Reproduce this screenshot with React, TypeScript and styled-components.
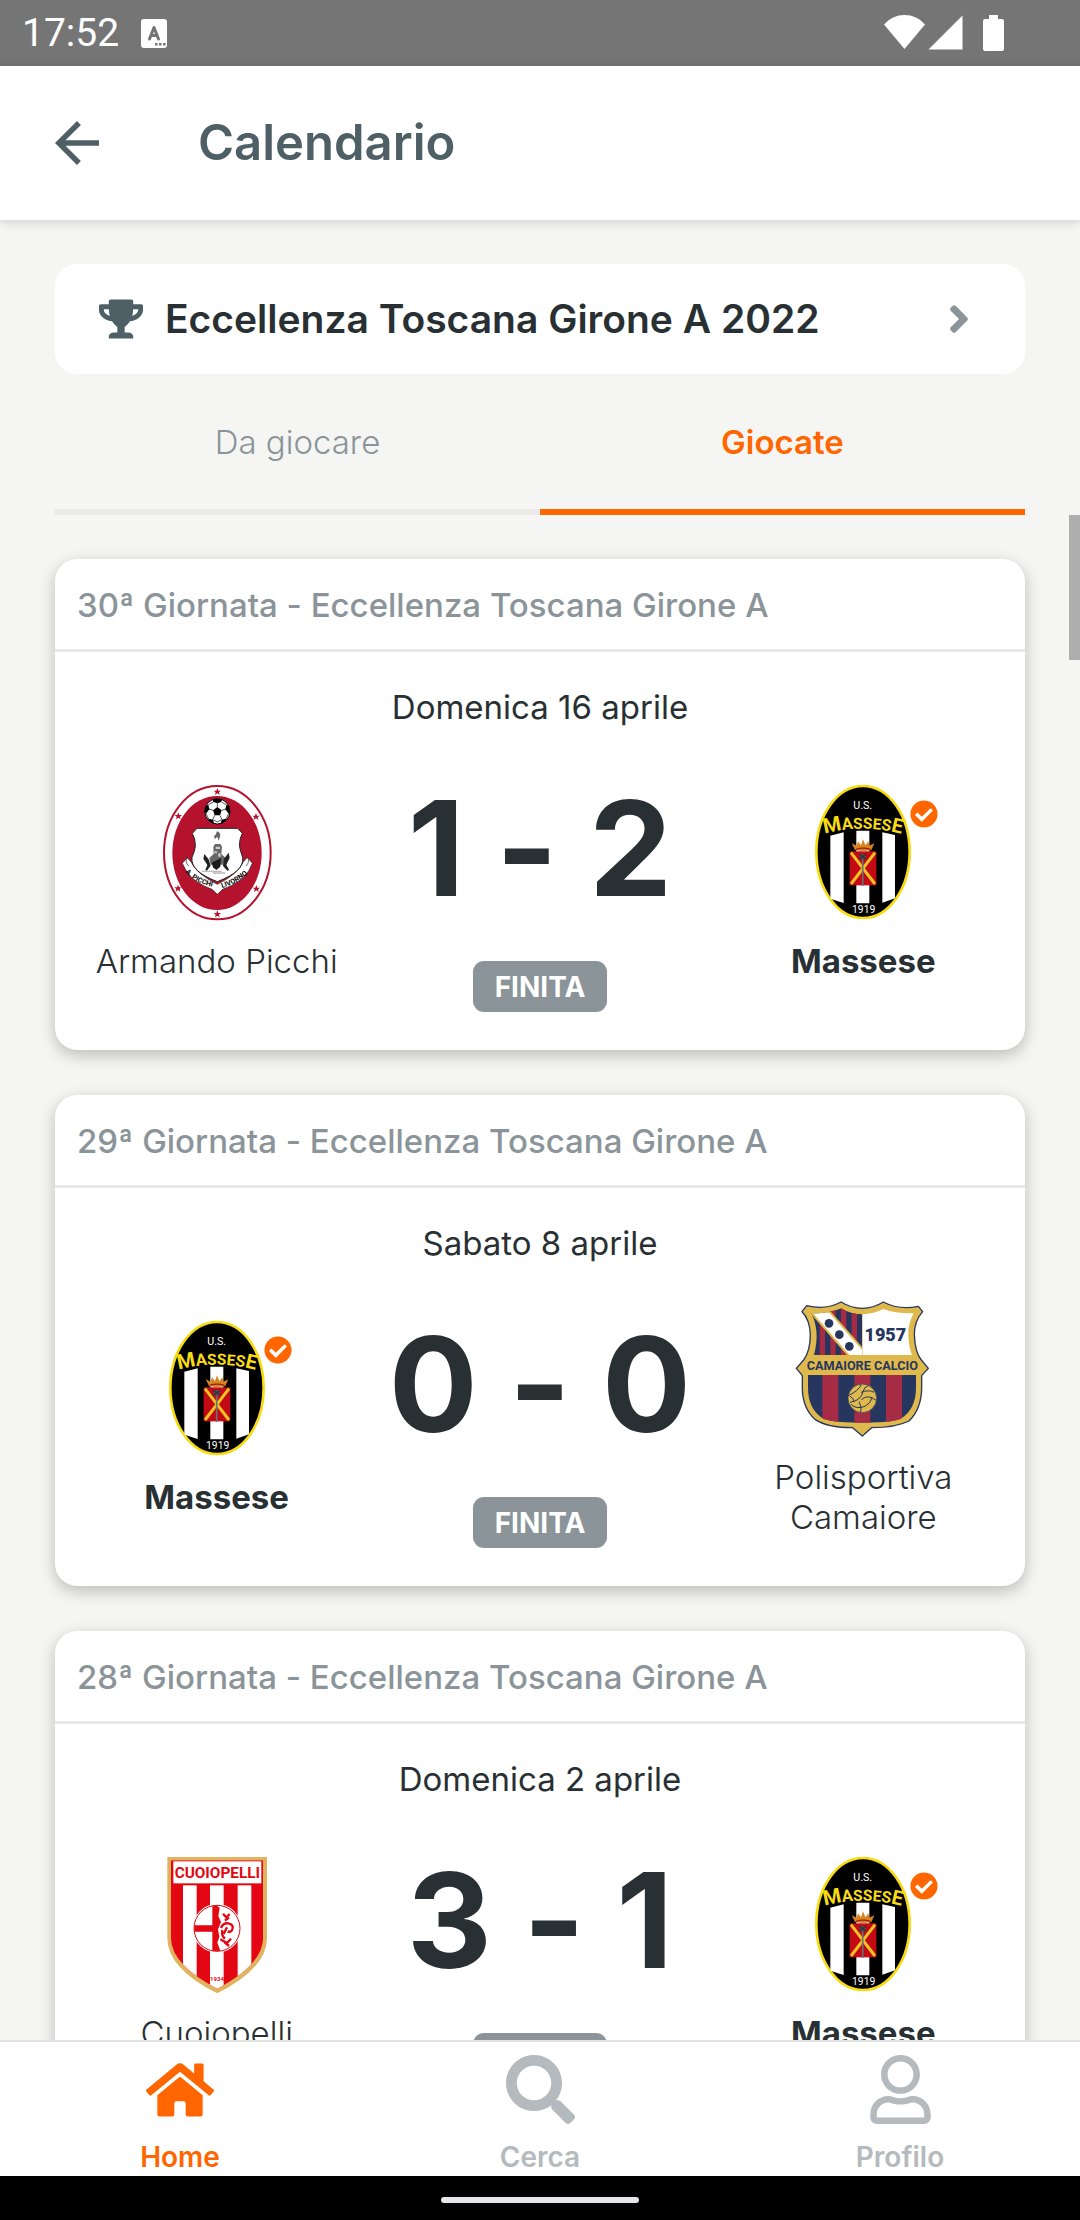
import React from "react";
import styled, { createGlobalStyle } from "styled-components";
import {
  FaAngleRight,
  FaCheckCircle,
  FaHome,
  FaRegUser,
  FaSearch,
  FaTrophy,
} from "react-icons/fa";
import { MdArrowBack } from "react-icons/md";

const color = {
  ink: "#283033",
  slate: "#4f5f66",
  muted: "#8a9499",
  faint: "#b4babd",
  accent: "#ff6600",
  page: "#f5f5f3",
  line: "#ebeae8",
};

const GlobalStyle = createGlobalStyle`
  *, *::before, *::after { box-sizing: border-box; }
  body { margin: 0; background: ${color.page}; }
  button { border: 0; padding: 0; background: none; font: inherit; color: inherit; cursor: pointer; }
  h1, h2, p { margin: 0; }
  svg { display: block; flex: none; }
`;

const Screen = styled.div`
  display: flex;
  flex-direction: column;
  height: 100vh;
  overflow: hidden;
  background: ${color.page};
  color: ${color.ink};
  font-family: Inter, "Open Sans", sans-serif;
  font-size: 33px;
  line-height: 40px;
  font-variant-ligatures: no-contextual;
`;

const StatusBar = styled.div`
  display: flex;
  align-items: center;
  justify-content: space-between;
  flex: none;
  height: 66px;
  padding: 0 76px 0 22px;
  background: #757575;
  color: #fff;
`;

const StatusGroup = styled.div<{ $gap: number }>`
  display: flex;
  align-items: center;
  gap: ${(p) => p.$gap}px;
`;

const Clock = styled.time`
  font-family: Roboto, sans-serif;
  font-size: 39px;
  line-height: 66px;
`;

const Header = styled.header`
  position: relative;
  z-index: 1;
  display: flex;
  align-items: center;
  gap: 88px;
  flex: none;
  height: 154px;
  padding: 0 44px;
  background: #fff;
  color: ${color.slate};
  box-shadow: 0 2px 10px rgba(0, 0, 0, 0.16);
`;

const Title = styled.h1`
  font-size: 49px;
  line-height: 60px;
  font-weight: 600;
`;

const Filters = styled.div`
  flex: none;
  padding: 44px 55px 0;
`;

const Competition = styled.button`
  display: flex;
  align-items: center;
  gap: 22px;
  width: 100%;
  height: 110px;
  padding: 0 55px 0 44px;
  border-radius: 22px;
  background: #fff;
  text-align: left;
`;

const CompetitionName = styled.span`
  flex: 1;
  font-size: 39px;
  line-height: 48px;
  font-weight: 600;
`;

const Tabs = styled.div`
  display: grid;
  grid-template-columns: 1fr 1fr;
`;

const Tab = styled.button<{ $active: boolean }>`
  height: 141px;
  border-bottom: 6px solid ${(p) => (p.$active ? color.accent : color.line)};
  color: ${(p) => (p.$active ? color.accent : color.muted)};
  font-weight: ${(p) => (p.$active ? 600 : 350)};
`;

const ListArea = styled.main`
  position: relative;
  flex: 1;
  min-height: 0;
`;

const List = styled.div`
  display: flex;
  flex-direction: column;
  gap: 45px;
  height: 100%;
  padding: 44px 55px;
  overflow-y: auto;
  scrollbar-width: none;
`;

const ScrollThumb = styled.div`
  position: absolute;
  top: 0;
  right: 0;
  width: 11px;
  height: 145px;
  background: #aeaeae;
`;

const Card = styled.article`
  flex: none;
  border-radius: 22px;
  background: #fff;
  box-shadow: 0 5px 16px rgba(0, 0, 0, 0.24);
`;

const CardHeader = styled.h2`
  padding: 26px 22px 24px;
  border-bottom: 3px solid ${color.line};
  color: ${color.muted};
  font-size: 33px;
  line-height: 40px;
  font-weight: 500;
`;

const CardBody = styled.div`
  display: flex;
  flex-direction: column;
  gap: 26px;
  padding: 35px 0 38px;
  text-align: center;
`;

const MatchRow = styled.div`
  display: grid;
  grid-template-columns: repeat(3, 1fr);
  align-items: center;
`;

const TeamColumn = styled.div`
  display: flex;
  flex-direction: column;
  align-items: center;
  gap: 19px;
  padding: 0 22px;
`;

const CrestFrame = styled.div`
  position: relative;
  width: 138px;
  height: 138px;
`;

const Verified = styled(FaCheckCircle)`
  position: absolute;
  top: 16px;
  left: 116px;
  color: ${color.accent};
`;

const TeamName = styled.p<{ $bold?: boolean }>`
  font-weight: ${(p) => (p.$bold ? 700 : 350)};
`;

const ResultColumn = styled.div`
  display: flex;
  flex-direction: column;
  align-items: center;
  gap: 18px;
`;

const Score = styled.p`
  font-size: 132px;
  line-height: 190px;
  font-weight: 700;
  white-space: nowrap;
`;

const Status = styled.span`
  padding: 6px 22px 5px;
  border-radius: 11px;
  background: ${color.muted};
  color: #fff;
  font-size: 28px;
  font-weight: 700;
`;

const BottomNav = styled.nav`
  display: grid;
  grid-template-columns: repeat(3, 1fr);
  flex: none;
  height: 136px;
  border-top: 2px solid #e2e2e2;
  background: #fff;
`;

const NavLink = styled.a<{ $active?: boolean }>`
  display: flex;
  flex-direction: column;
  align-items: center;
  gap: 13px;
  padding-top: 13px;
  color: ${(p) => (p.$active ? color.accent : color.faint)};
  font-size: 28px;
  font-weight: 600;
  text-decoration: none;
`;

const NavIcon = styled.span`
  display: flex;
  align-items: center;
  height: 69px;
`;

const GestureBar = styled.div`
  display: flex;
  align-items: center;
  justify-content: center;
  flex: none;
  height: 44px;
  background: #000;
`;

const GestureHandle = styled.div`
  width: 198px;
  height: 6px;
  border-radius: 3px;
  margin-top: 4px;
  background: #e8e6e8;
`;

const badgeFont = "Roboto, sans-serif";

function MasseseCrest() {
  return (
    <svg width="138" height="138" viewBox="15 42 414 414" role="img" aria-label="Massese">
      <defs>
        <clipPath id="massese-oval">
          <ellipse cx="222" cy="246" rx="138" ry="195" />
        </clipPath>
        <path id="massese-arc" d="M98 194 Q222 158 346 194" />
      </defs>
      <ellipse cx="222" cy="246" rx="140" ry="198" fill="#000" stroke="#f7dc14" strokeWidth="8" />
      <g clipPath="url(#massese-oval)" fill="#fff">
        <path d="M124 197 L164 187 V399 L124 386Z" />
        <path d="M202 182 H241 V400 H202Z" />
        <path d="M280 187 L318 195 V385 L280 398Z" />
      </g>
      <text x="221" y="117" fill="#fff" fontFamily={badgeFont} fontSize="32" textAnchor="middle">U.S.</text>
      <text fill="#f7dc14" fontFamily={badgeFont} fontWeight="700">
        <textPath href="#massese-arc" startOffset="50%" textAnchor="middle">
          <tspan fontSize="62">M</tspan>
          <tspan fontSize="50">A</tspan>
          <tspan fontSize="46">SSE</tspan>
          <tspan fontSize="48">S</tspan>
          <tspan fontSize="60">E</tspan>
        </textPath>
      </text>
      <path d="M198 240 L188 220 L203 227 L207 214 L216 226 L222 208 L229 226 L238 214 L241 227 L256 220 L247 240 Q222 246 198 240Z" fill="#d9821e" />
      <path d="M201 238 Q222 231 244 238" stroke="#8e2410" strokeWidth="4" fill="none" />
      <rect x="182" y="244" width="80" height="102" fill="#c20914" />
      <path d="M186 248 L258 342 M258 248 L186 342" stroke="#f3c321" strokeWidth="9" />
      <path d="M221 262 V348" stroke="#697079" strokeWidth="5" />
      <circle cx="221" cy="260" r="9" fill="#4a4d52" />
      <path d="M210 252 L232 268 M232 252 L210 268" stroke="#30343a" strokeWidth="4" />
      <text x="224" y="430" fill="#fff" fontFamily={badgeFont} fontSize="31" textAnchor="middle">1919</text>
    </svg>
  );
}

const starSpots = [
  [229, 65],
  [112, 138],
  [345, 140],
  [111, 355],
  [346, 356],
  [229, 432],
];

function PicchiCrest() {
  return (
    <svg width="138" height="138" viewBox="21 42 414 414" role="img" aria-label="Armando Picchi">
      <defs>
        <clipPath id="picchi-ball">
          <circle cx="229" cy="124" r="38" />
        </clipPath>
        <path id="picchi-left" d="M133 306 Q166 342 222 352" />
        <path id="picchi-right" d="M243 354 Q292 340 330 302" />
      </defs>
      <ellipse cx="229" cy="248" rx="160" ry="200" fill="#fff" stroke="#b5122e" strokeWidth="6" />
      <ellipse cx="228" cy="249" rx="134" ry="171" fill="#b5122e" />
      {starSpots.map(([x, y]) => (
        <path
          key={`${x}-${y}`}
          d={`M${x} ${y - 11} l3 8 h8 l-6 5 l2 8 l-7 -5 l-7 5 l2 -8 l-6 -5 h8Z`}
          fill="#b5122e"
        />
      ))}
      <circle cx="229" cy="124" r="38" fill="#fff" stroke="#000" strokeWidth="3" />
      <g clipPath="url(#picchi-ball)">
        <path d="M229 111 L242 121 L237 136 H221 L216 121Z" />
        <path d="M212 84 H247 L240 96 L229 100 L217 96Z" />
        <path d="M188 110 L202 104 L205 118 L195 131 L186 128Z" />
        <path d="M270 110 L256 104 L253 118 L263 131 L272 128Z" />
        <path d="M200 158 L203 146 L216 149 L220 164Z" />
        <path d="M258 158 L255 146 L242 149 L238 164Z" />
        <path
          d="M229 111 V99 M242 121 L254 117 M216 121 L204 117 M237 136 L243 149 M221 136 L215 149 M195 131 L203 147 M263 131 L255 147 M202 104 L217 96 M256 104 L241 96 M216 149 L229 156 L242 149"
          stroke="#000"
          strokeWidth="2"
          fill="none"
        />
      </g>
      <path
        d="M124 280 L139 263 L151 277 Q166 311 229 343 Q292 311 306 277 L319 262 L334 280 L323 303 Q300 338 245 358 L229 373 L213 358 Q158 338 136 303Z"
        fill="#fff"
        stroke="#222"
        strokeWidth="2"
      />
      <path
        d="M168 175 H290 L304 190 Q290 218 299 244 L305 262 Q311 304 229 335 Q147 304 153 262 L160 244 Q168 218 154 190Z"
        fill="#fff"
        stroke="#222"
        strokeWidth="3"
      />
      <path d="M228 184 Q240 188 237 200 L233 212 L229 200 L222 207 Q216 196 224 194Z" fill="#666" />
      <path d="M217 230 L222 222 H238 L243 230 L241 252 L252 262 L247 284 H209 L205 264 L218 252Z" fill="#666" />
      <path d="M224 230 h13 v7 h-13Z M220 244 h8 v6 h-8Z M232 250 h7 v10 h-7Z" fill="#ccc" />
      <path d="M190 252 L203 268 L209 287 L197 303 L193 299 L199 285 L187 266Z" fill="#222" />
      <path d="M263 248 L249 266 L246 288 L260 303 L264 299 L256 284 L266 264Z" fill="#222" />
      <path d="M212 278 L240 264 L238 290 L226 300 L216 292Z" fill="#1a1a1a" />
      <path d="M182 304 H242 M215 309 H252" stroke="#bbb" strokeWidth="4" />
      <path d="M139 263 Q130 274 143 288 M319 262 Q328 274 315 288" stroke="#222" strokeWidth="2" fill="none" />
      <g fill="#000" fontFamily={badgeFont} fontSize="21" fontWeight="700">
        <text>
          <textPath href="#picchi-left">A. PICCHI</textPath>
        </text>
        <text>
          <textPath href="#picchi-right">LIVORNO</textPath>
        </text>
      </g>
    </svg>
  );
}

function CamaioreCrest() {
  const navy = "#26365f";
  const maroon = "#a62b45";
  const gold = "#dfb94c";
  return (
    <svg width="138" height="138" viewBox="45 57 414 414" role="img" aria-label="Polisportiva Camaiore">
      <defs>
        <clipPath id="camaiore-top">
          <path d="M97 97 Q150 99 186 82 Q215 100 250 100 V222 H105 Q124 150 97 97Z" />
        </clipPath>
        <clipPath id="camaiore-bottom">
          <path d="M87 282 H411 V320 Q411 385 365 413 Q335 425 250 425 Q165 425 133 413 Q87 385 87 320Z" />
        </clipPath>
      </defs>
      <path
        d="M83 74 Q140 88 186 63 Q217 82 250 82 Q282 82 313 63 Q360 88 418 76 L431 92 Q406 120 406 160 Q408 215 427 237 L448 262 L428 284 V320 Q428 382 390 420 Q350 440 278 440 L250 465 L221 440 Q145 440 108 415 Q70 380 70 320 V284 L52 262 L74 237 Q94 210 94 160 Q92 115 69 92Z"
        fill={gold}
        stroke={navy}
        strokeWidth="4"
        strokeLinejoin="round"
      />
      <path
        d="M250 100 Q285 98 313 84 Q350 98 404 97 Q386 130 388 165 Q390 200 399 222 H250Z"
        fill="#fff"
      />
      <g clipPath="url(#camaiore-top)">
        <rect x="90" y="75" width="162" height="150" fill={navy} />
        {[122, 154, 186, 218].map((x) => (
          <rect key={x} x={x} y="75" width="16" height="150" fill={maroon} />
        ))}
        <path d="M94 92 H152 L256 210 V234 H218Z" fill="#fff" stroke={gold} strokeWidth="6" />
        <circle cx="150" cy="127" r="13" fill={navy} />
        <circle cx="181" cy="161" r="13" fill={navy} />
        <circle cx="211" cy="196" r="13" fill={navy} />
      </g>
      <text x="319" y="180" fill={navy} fontFamily={badgeFont} fontSize="54" fontWeight="900" textAnchor="middle">1957</text>
      <text x="250" y="266" fill={navy} fontFamily={badgeFont} fontSize="38" fontWeight="700" textAnchor="middle">CAMAIORE CALCIO</text>
      <g clipPath="url(#camaiore-bottom)">
        <rect x="80" y="282" width="340" height="150" fill={navy} />
        {[130, 226, 321].map((x) => (
          <rect key={x} x={x} y="282" width="48" height="150" fill={maroon} />
        ))}
      </g>
      <circle cx="250" cy="352" r="43" fill={gold} stroke={navy} strokeWidth="2" />
      <path
        d="M209 343 Q238 330 247 311 M213 364 Q245 360 252 332 Q255 318 268 314 M246 334 Q270 325 285 334 M247 356 Q266 338 291 358 M216 370 Q232 386 258 376 Q276 366 279 350 M240 362 Q250 384 244 393 M212 345 Q225 352 225 361"
        stroke={navy}
        strokeWidth="3"
        fill="none"
      />
    </svg>
  );
}

function CuoiopelliCrest() {
  const red = "#e30613";
  return (
    <svg width="138" height="138" viewBox="21 42 414 414" role="img" aria-label="Cuoiopelli">
      <defs>
        <clipPath id="cuoio-shield">
          <path d="M90 55 H366 V290 Q364 368 229 440 Q92 368 90 290Z" />
        </clipPath>
      </defs>
      <path d="M79 45 H378 V290 Q376 380 229 454 Q81 380 79 290Z" fill="#e2b35e" />
      <g clipPath="url(#cuoio-shield)">
        <rect x="79" y="45" width="300" height="410" fill={red} />
        <rect x="97" y="58" width="264" height="66" fill="#fff" />
        {[126, 207, 290].map((x) => (
          <rect key={x} x={x} y="130" width="41" height="320" fill="#fff" />
        ))}
      </g>
      <text x="229" y="108" fill={red} fontFamily={badgeFont} fontSize="46" fontWeight="700" textAnchor="middle">CUOIOPELLI</text>
      <circle cx="228" cy="259" r="73" fill="#fff" />
      <circle cx="228" cy="259" r="69" fill="#fff" stroke={red} strokeWidth="3" />
      <path d="M214 191 H228 L236 198 L232 222 L240 240 L231 262 L235 284 L229 302 L238 326 L214 327 V269 H160 V250 H214Z" fill={red} />
      <path d="M246 215 L256 226 L266 216 M252 236 L264 226 M240 258 Q246 242 262 244 Q279 248 274 262 Q270 272 260 268 M244 264 Q240 280 252 290 M258 256 L248 276 M238 292 L258 303 L270 290 M250 300 L264 312" stroke={red} strokeWidth="7" fill="none" />
      <text x="228" y="417" fill={red} fontFamily={badgeFont} fontSize="18" fontWeight="700" textAnchor="middle">1934</text>
    </svg>
  );
}

type Team = { name: string; Crest: () => React.JSX.Element; followed?: boolean };
type Match = { day: number; date: string; home: Team; away: Team; score: string };

const massese: Team = { name: "Massese", Crest: MasseseCrest, followed: true };

const matches: Match[] = [
  {
    day: 30,
    date: "Domenica 16 aprile",
    home: { name: "Armando Picchi", Crest: PicchiCrest },
    away: massese,
    score: "1 - 2",
  },
  {
    day: 29,
    date: "Sabato 8 aprile",
    home: massese,
    away: { name: "Polisportiva Camaiore", Crest: CamaioreCrest },
    score: "0 - 0",
  },
  {
    day: 28,
    date: "Domenica 2 aprile",
    home: { name: "Cuoiopelli", Crest: CuoiopelliCrest },
    away: massese,
    score: "3 - 1",
  },
];

function TeamCell({ team }: { team: Team }) {
  return (
    <TeamColumn>
      <CrestFrame>
        <team.Crest />
        {team.followed && <Verified size={28} />}
      </CrestFrame>
      <TeamName $bold={team.followed}>{team.name}</TeamName>
    </TeamColumn>
  );
}

function MatchCard({ match }: { match: Match }) {
  return (
    <Card>
      <CardHeader>{`${match.day}ª Giornata - Eccellenza Toscana Girone A`}</CardHeader>
      <CardBody>
        <p>{match.date}</p>
        <MatchRow>
          <TeamCell team={match.home} />
          <ResultColumn>
            <Score>{match.score}</Score>
            <Status>FINITA</Status>
          </ResultColumn>
          <TeamCell team={match.away} />
        </MatchRow>
      </CardBody>
    </Card>
  );
}

export default function App() {
  const [tab, setTab] = React.useState("Giocate");
  return (
    <Screen>
      <GlobalStyle />
      <StatusBar>
        <StatusGroup $gap={22}>
          <Clock>17:52</Clock>
          <svg width="26" height="29" viewBox="0 0 26 29" aria-hidden="true">
            <rect width="26" height="29" rx="3" fill="#fff" />
            <path d="M8.500 20 L13 8.500 L17.500 20 M10 16.500 H16" stroke="#757575" strokeWidth="3" strokeLinecap="round" strokeLinejoin="round" fill="none" />
            <path d="M14 24 h2.500 v2.500 h-2.500Z M18 24 h2.500 v2.500 h-2.500Z M22 24 h2.500 v2.500 h-2.500Z" fill="#757575" />
          </svg>
        </StatusGroup>
        <svg width="120" height="36" viewBox="0 0 120 36" fill="#fff" aria-hidden="true">
          <path d="M0 9.500 Q8 0 20.500 0 Q33 0 41 9.500 L20.500 34Z" />
          <path d="M78.500 0.500 V34.500 H44.500Z" />
          <path d="M105 0 H114 V4 H118 Q120 4 120 6 V34 Q120 36 118 36 H101 Q99 36 99 34 V6 Q99 4 101 4 H105Z" />
        </svg>
      </StatusBar>
      <Header>
        <button type="button" aria-label="Indietro">
          <MdArrowBack size={66} />
        </button>
        <Title>Calendario</Title>
      </Header>
      <Filters>
        <Competition type="button">
          <FaTrophy size={40} color={color.slate} style={{ width: 44 }} />
          <CompetitionName>Eccellenza Toscana Girone A 2022</CompetitionName>
          <FaAngleRight size={44} color={color.muted} style={{ width: 22 }} />
        </Competition>
        <Tabs role="tablist">
          {["Da giocare", "Giocate"].map((label) => (
            <Tab
              key={label}
              type="button"
              role="tab"
              aria-selected={tab === label}
              $active={tab === label}
              onClick={() => setTab(label)}
            >
              {label}
            </Tab>
          ))}
        </Tabs>
      </Filters>
      <ListArea>
        <List>
          {matches.map((match) => (
            <MatchCard key={match.day} match={match} />
          ))}
        </List>
        <ScrollThumb />
      </ListArea>
      <BottomNav>
        <NavLink href="#home" $active>
          <NavIcon>
            <FaHome size={68} />
          </NavIcon>
          Home
        </NavLink>
        <NavLink href="#cerca">
          <NavIcon>
            <FaSearch size={69} />
          </NavIcon>
          Cerca
        </NavLink>
        <NavLink href="#profilo">
          <NavIcon>
            <FaRegUser size={69} />
          </NavIcon>
          Profilo
        </NavLink>
      </BottomNav>
      <GestureBar>
        <GestureHandle />
      </GestureBar>
    </Screen>
  );
}
